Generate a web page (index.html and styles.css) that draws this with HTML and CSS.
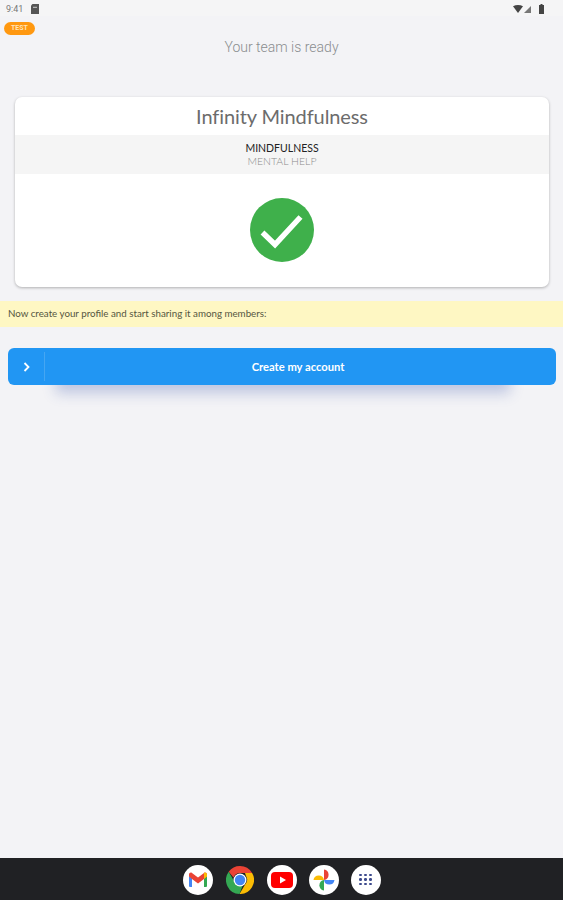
FILE: index.html
```html
<!doctype html>
<html lang="en-us">

<head>
    <title>Your team is ready</title>
    <meta charset="utf-8">
    <link rel="stylesheet" href="styles.css">
</head>

<body>
    <div id="main-container">
        <div class="status-bar">
            <div class="status-left">
                <span class="clock">9:41</span>
                <svg width="8" height="10" viewBox="0 0 8 10"><path d="M1.500 0H8v10H0V1.500z" fill="#555"/><path d="M2 2.800h4v1H2z" fill="#ccc"/></svg>
            </div>
            <div class="status-right">
                <svg width="10" height="8" viewBox="0 0 10 8"><path d="M0 1.200C3-.4 7-.4 10 1.200L5 8z" fill="#444"/></svg>
                <svg width="7" height="7" viewBox="0 0 7 7"><path d="M7 0v7H0z" fill="#777"/></svg>
                <svg class="battery" width="5" height="10" viewBox="0 0 5 10"><path d="M1.500 0h2v1H5v9H0V1h1.500z" fill="#444"/></svg>
            </div>
        </div>

        <span class="badge">TEST</span>
        <div class="page-title">Your team is ready</div>

        <div class="card">
            <div class="card-title">Infinity Mindfulness</div>
            <div class="card-band">
                <div class="band-main">MINDFULNESS</div>
                <div class="band-sub">MENTAL HELP</div>
            </div>
            <div class="card-check">
                <svg width="64" height="64" viewBox="0 0 64 64">
                    <circle cx="32" cy="32" r="32" fill="#3fb04b"/>
                    <path d="M12.500 34.500L25 46.500L50.500 19" fill="none" stroke="#fff" stroke-width="5.500"/>
                </svg>
            </div>
        </div>

        <div class="notice">Now create your profile and start sharing it among members:</div>

        <div class="action">
            <div class="action-icon">
                <svg width="7" height="10" viewBox="0 0 7 10"><path d="M1.500 1L5.500 5L1.500 9" fill="none" stroke="#fff" stroke-width="1.800"/></svg>
            </div>
            <div class="action-label">Create my account</div>
        </div>

        <div class="dock">
            <div class="app">
                <svg width="20" height="16" viewBox="0 0 20 16">
                    <path d="M1 15V4l3 2v9H2a1 1 0 0 1-1-1z" fill="#4285f4"/>
                    <path d="M19 15V4l-3 2v9h2a1 1 0 0 0 1-1z" fill="#34a853"/>
                    <path d="M1 4.500V2.500C1 .9 2.800 0 4 1l6 4.500L16 1c1.200-1 3-.1 3 1.500v2L16 7l-6 4.500L4 7z" fill="#ea4335"/>
                    <path d="M16 1c1.200-1 3-.1 3 1.500v2L16 7z" fill="#fbbc04"/>
                </svg>
            </div>
            <div class="app app-chrome">
                <svg width="28" height="28" viewBox="0 0 28 28">
                    <path d="M14 0a14 14 0 0 1 12.100 7H14a7 7 0 0 0-6.500 4.500L2.700 5.800A14 14 0 0 1 14 0z" fill="#ea4335"/>
                    <path d="M26.100 7A14 14 0 0 1 13.500 28l5.600-9.500A7 7 0 0 0 20 10l-1-3z" fill="#fbbc04"/>
                    <path d="M2.700 5.800l5 8.700a7 7 0 0 0 9 5l-3.200 8.500A14 14 0 0 1 2.700 5.800z" fill="#34a853"/>
                    <circle cx="14" cy="14" r="6.500" fill="#fff"/>
                    <circle cx="14" cy="14" r="5.200" fill="#4285f4"/>
                </svg>
            </div>
            <div class="app">
                <svg width="22" height="16" viewBox="0 0 22 16">
                    <rect width="22" height="16" rx="4" fill="#f00"/>
                    <path d="M9 4.500L15 8L9 11.500z" fill="#fff"/>
                </svg>
            </div>
            <div class="app">
                <svg width="22" height="22" viewBox="0 0 22 22">
                    <path d="M11 11V0.500a5.300 5.300 0 0 1 0 10.500z" fill="#ea4335"/>
                    <path d="M11 11h10.500a5.300 5.300 0 0 1-10.500 0z" fill="#4285f4"/>
                    <path d="M11 11v10.500a5.300 5.300 0 0 1 0-10.500z" fill="#34a853"/>
                    <path d="M11 11H0.500a5.300 5.300 0 0 1 10.500 0z" fill="#fbbc04"/>
                </svg>
            </div>
            <div class="app">
                <div class="dots">
                    <i></i><i></i><i></i><i></i><i></i><i></i><i></i><i></i><i></i>
                </div>
            </div>
        </div>
    </div>
</body>

</html>
```

FILE: styles.css
```css
html, body {
    margin: 0;
    padding: 0;
}

#main-container {
    position: relative;
    z-index: 0;
    width: 563px;
    height: 900px;
    display: flex;
    flex-direction: column;
    overflow: hidden;
    background-color: #f3f3f6;
    font-family: Lato, sans-serif;
}

.status-bar {
    height: 16px;
    padding: 2px 19px 0 6px;
    box-sizing: border-box;
    display: flex;
    justify-content: space-between;
    align-items: center;
    background-color: #f5f5f6;
}

.status-left, .status-right {
    display: flex;
    align-items: center;
}

.status-left {
    gap: 8px;
}

.status-right {
    gap: 1px;
}

.battery {
    margin-left: 7px;
}

.clock {
    font-family: Roboto, sans-serif;
    font-size: 9px;
    color: #777;
}

.badge {
    position: absolute;
    left: 4px;
    top: 22px;
    width: 31px;
    height: 13px;
    border-radius: 7px;
    background-color: #ff9810;
    color: #ffe3b8;
    font-family: Roboto, sans-serif;
    font-size: 7px;
    font-weight: 700;
    line-height: 13px;
    text-align: center;
}

.page-title {
    margin-top: 22px;
    height: 59px;
    text-align: center;
    font-family: Roboto, sans-serif;
    font-size: 14px;
    font-weight: 300;
    line-height: 18px;
    color: #8a8d8f;
}

.card {
    margin: 0 14px 0 15px;
    height: 190px;
    background-color: #fff;
    border-radius: 7px;
    box-shadow: 0 1px 3px rgba(0, 0, 0, .28);
    overflow: hidden;
}

.card-title {
    height: 38px;
    line-height: 38px;
    text-align: center;
    font-size: 20px;
    color: #6c6c6c;
    letter-spacing: -.1px;
}

.card-band {
    height: 39px;
    padding-top: 7px;
    box-sizing: border-box;
    background-color: #f5f5f5;
    text-align: center;
    font-size: 10.500px;
    line-height: 13px;
}

.band-main {
    color: #222;
}

.band-sub {
    color: #8c8c8c;
    font-weight: 300;
}

.card-check {
    padding-top: 24px;
    display: flex;
    justify-content: center;
}

.notice {
    margin-top: 14px;
    height: 26px;
    padding-left: 8px;
    background-color: #fef7c3;
    font-size: 9.750px;
    line-height: 25px;
    color: #55563f;
}

.action {
    position: relative;
    margin: 21px 7px 0 8px;
    height: 37px;
    display: flex;
    background-color: #2196f3;
    border-radius: 6px;
}

/* soft shadow, narrower than the button */
.action::after {
    content: "";
    position: absolute;
    left: 48px;
    right: 46px;
    top: 12px;
    bottom: 1px;
    z-index: -1;
    box-shadow: 0 9px 14px rgba(50, 80, 170, .28);
}

.action-icon {
    width: 36px;
    margin: 4px 0;
    display: flex;
    align-items: center;
    justify-content: center;
    border-right: 1px solid #45a6f2;
}

.action-label {
    flex: 1;
    padding-right: 5px;
    text-align: center;
    font-size: 11.200px;
    font-weight: 700;
    line-height: 37px;
    color: #fff;
}

.dock {
    margin-top: auto;
    height: 42px;
    padding-top: 1px;
    box-sizing: border-box;
    display: flex;
    justify-content: center;
    align-items: center;
    gap: 12px;
    background-color: #202124;
}

.app {
    width: 30px;
    height: 30px;
    border-radius: 50%;
    display: flex;
    align-items: center;
    justify-content: center;
    background-color: #fff;
}

.app-chrome {
    background-color: transparent;
}

.dots {
    display: grid;
    grid-template-columns: repeat(3, 2.500px);
    gap: 2px 2.500px;
}

.dots i {
    width: 2.500px;
    height: 2.500px;
    border-radius: 50%;
    background-color: #3c4a8c;
}
```
